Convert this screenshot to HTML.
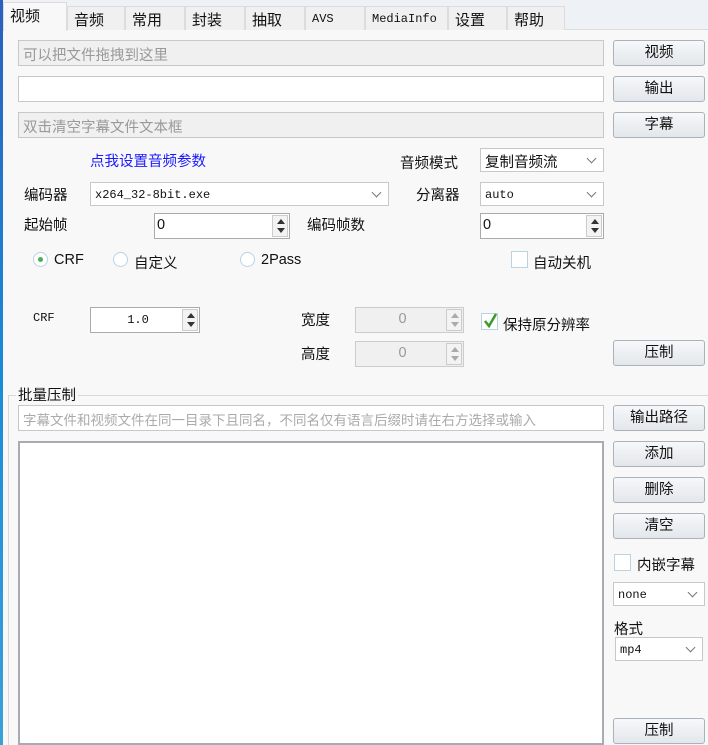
<!DOCTYPE html><html><head><meta charset="utf-8"><style>
*{box-sizing:border-box}
body{margin:0;width:708px;height:745px;overflow:hidden;background:#f8f8f8;font-family:"Liberation Sans","Noto Sans CJK SC",sans-serif;font-size:14.5px;color:#111;position:relative}
.a{position:absolute}
.strip{left:0;top:0;width:3px;height:745px;background:linear-gradient(#2a5fc0,#1a8ad8,#3aa0d8)}
.tabbar{left:3px;top:0;width:705px;height:30px;background:#eef1f5;border-bottom:1px solid #dcdcdc}
.tab{top:6px;height:24px;background:#f0f0f0;border:1px solid #dcdcdc;border-bottom:none;padding:2px 0 0 6px;font-size:15px}
.tab.act{top:2px;height:29px;background:#f8f8f8}
.mono{font-family:"Liberation Mono","DejaVu Sans Mono",monospace;font-size:12px}
.in{border:1px solid #c8c8c8;background:#f0f0f0;color:#999;padding:3px 4px;height:26px}
.btn{border:1px solid #aab2bb;border-radius:3px;background:linear-gradient(#f6f8fa,#e3e7eb);text-align:center;line-height:24px;width:92px;height:26px;left:613px}
.cb{border:1px solid #c8c8c8;background:#fff;height:24px;padding:2px 4px}
.cb:after{content:"";position:absolute;right:8px;top:6px;width:6px;height:6px;border-right:1px solid #777;border-bottom:1px solid #777;transform:rotate(45deg)}
.sp{border:1px solid #aaa;background:#fff;height:26px;padding:3px 2px}
.sp i{position:absolute;right:1px;top:1px;width:16px;height:22px;border:1px solid #ccc;background:#f3f3f3}
.sp i:before{content:"";position:absolute;left:4px;top:3px;border:4px solid transparent;border-bottom:5px solid #333;border-top:none}
.sp i:after{content:"";position:absolute;left:4px;top:12px;border:4px solid transparent;border-top:5px solid #333;border-bottom:none}
.sp.d{background:#f0f0f0;color:#999;border-color:#ccc}
.sp.d i:before{border-bottom-color:#aaa}.sp.d i:after{border-top-color:#aaa}
.rad{width:15px;height:15px;border:1px solid #b8d4e4;border-radius:50%;background:#fff}
.chk{width:17px;height:17px;border:1px solid #b8d4e4;background:#fff}
</style></head><body>
<div class="a strip"></div>
<div class="a tabbar"></div>
<div class="a tab act" style="left:3px;width:64px">视频</div>
<div class="a tab" style="left:67px;width:58px">音频</div>
<div class="a tab" style="left:125px;width:60px">常用</div>
<div class="a tab" style="left:185px;width:60px">封装</div>
<div class="a tab" style="left:245px;width:60px">抽取</div>
<div class="a tab mono" style="left:305px;width:60px;padding-top:5px">AVS</div>
<div class="a tab mono" style="left:365px;width:83px;padding-top:5px">MediaInfo</div>
<div class="a tab" style="left:448px;width:59px">设置</div>
<div class="a tab" style="left:507px;width:58px">帮助</div>

<div class="a in" style="left:18px;top:40px;width:586px">可以把文件拖拽到这里</div>
<div class="a in" style="left:18px;top:76px;width:586px;background:#fff"></div>
<div class="a in" style="left:18px;top:112px;width:586px">双击清空字幕文件文本框</div>
<div class="a btn" style="top:40px">视频</div>
<div class="a btn" style="top:76px">输出</div>
<div class="a btn" style="top:112px">字幕</div>

<div class="a" style="left:90px;top:150px;color:#1a1aff">点我设置音频参数</div>
<div class="a" style="left:400px;top:152px">音频模式</div>
<div class="a cb" style="left:480px;top:148px;width:124px">复制音频流</div>
<div class="a" style="left:24px;top:184px">编码器</div>
<div class="a cb mono" style="left:90px;top:182px;width:299px;padding-top:5px">x264_32-8bit.exe</div>
<div class="a" style="left:416px;top:184px">分离器</div>
<div class="a cb mono" style="left:480px;top:182px;width:124px;padding-top:5px">auto</div>
<div class="a" style="left:24px;top:214px">起始帧</div>
<div class="a sp" style="left:154px;top:213px;width:136px">0<i></i></div>
<div class="a" style="left:307px;top:214px">编码帧数</div>
<div class="a sp" style="left:480px;top:213px;width:124px">0<i></i></div>

<div class="a rad" style="left:33px;top:252px"><div class="a" style="left:4px;top:4px;width:5px;height:5px;border-radius:50%;background:#4caf50"></div></div>
<div class="a" style="left:54px;top:252px">CRF</div>
<div class="a rad" style="left:113px;top:252px"></div>
<div class="a" style="left:134px;top:252px">自定义</div>
<div class="a rad" style="left:240px;top:252px"></div>
<div class="a" style="left:261px;top:252px">2Pass</div>
<div class="a chk" style="left:511px;top:251px"></div>
<div class="a" style="left:533px;top:252px">自动关机</div>

<div class="a mono" style="left:33px;top:311px">CRF</div>
<div class="a sp mono" style="left:90px;top:307px;width:110px;text-align:center;padding-right:16px;padding-top:5px">1.0<i></i></div>
<div class="a" style="left:301px;top:309px">宽度</div>
<div class="a sp d" style="left:355px;top:307px;width:109px;text-align:center;padding-right:16px">0<i></i></div>
<div class="a" style="left:301px;top:343px">高度</div>
<div class="a sp d" style="left:355px;top:341px;width:109px;text-align:center;padding-right:16px">0<i></i></div>
<div class="a chk" style="left:481px;top:313px"><svg width="17" height="17" style="position:absolute;left:0;top:-2px"><path d="M3 9 L7 14 L14 2" stroke="#3a9a2a" stroke-width="2.5" fill="none"/></svg></div>
<div class="a" style="left:503px;top:314px">保持原分辨率</div>
<div class="a btn" style="top:340px">压制</div>

<div class="a" style="left:8px;top:395px;width:700px;height:350px;border-left:1px solid #d8d8d8;border-top:1px solid #d8d8d8"></div>
<div class="a" style="left:16px;top:384px;background:#f8f8f8;padding:0 2px">批量压制</div>
<div class="a in" style="left:18px;top:405px;width:586px;background:#fff;font-size:13.5px;color:#aaa;white-space:nowrap;overflow:hidden">字幕文件和视频文件在同一目录下且同名，不同名仅有语言后缀时请在右方选择或输入</div>
<div class="a" style="left:18px;top:441px;width:586px;height:304px;border:2px solid #a8acb2;background:#fff"></div>
<div class="a btn" style="top:405px">输出路径</div>
<div class="a btn" style="top:441px">添加</div>
<div class="a btn" style="top:477px">删除</div>
<div class="a btn" style="top:513px">清空</div>
<div class="a chk" style="left:614px;top:554px"></div>
<div class="a" style="left:637px;top:554px">内嵌字幕</div>
<div class="a cb mono" style="left:613px;top:582px;width:92px;padding-top:5px">none</div>
<div class="a" style="left:614px;top:618px">格式</div>
<div class="a cb mono" style="left:615px;top:637px;width:88px;padding-top:5px">mp4</div>
<div class="a btn" style="top:718px">压制</div>
</body></html>
